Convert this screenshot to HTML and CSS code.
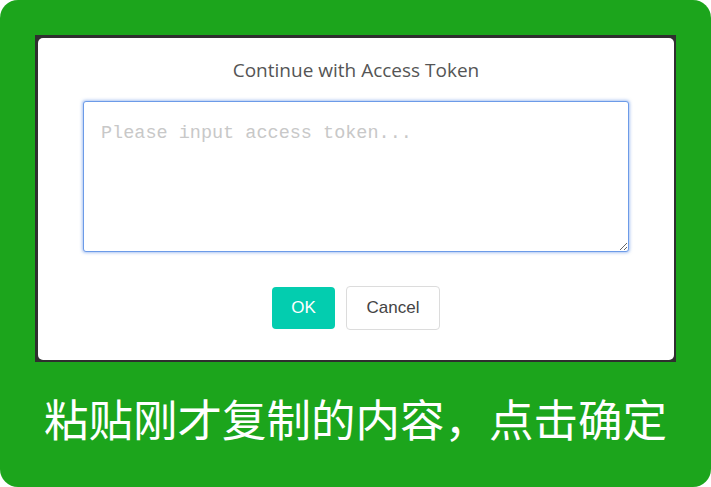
FILE: index.html
```html
<!DOCTYPE html>
<html>
<head>
<meta charset="utf-8">
<link rel="stylesheet" href="styles.css">
</head>
<body>
<div class="card">
  <div class="shot">
    <div class="dialog">
      <div class="title">Continue with Access Token</div>
      <textarea class="token" placeholder="Please input access token..."></textarea>
      <div class="actions">
        <button class="btn ok">OK</button>
        <button class="btn cancel">Cancel</button>
      </div>
    </div>
  </div>
  <div class="caption">粘贴刚才复制的内容，点击确定</div>
</div>
</body>
</html>
```
FILE: styles.css
```css
html, body {
  margin: 0;
  padding: 0;
  background: #ffffff;
}
.card {
  width: 711px;
  height: 487px;
  box-sizing: border-box;
  background: #1ca51c;
  border-radius: 18px;
  padding: 35px 35px 0 35px;
  display: flex;
  flex-direction: column;
}
.shot {
  width: 641px;
  height: 327px;
  box-sizing: border-box;
  background: #2f2f2f;
  padding: 3px 2px 2px 3px;
}
.dialog {
  height: 100%;
  background: #ffffff;
  border-radius: 5px;
  display: flex;
  flex-direction: column;
  align-items: center;
  padding: 20px 45px 0 45px;
  box-sizing: border-box;
}
.title {
  font-family: "Open Sans", "Noto Sans", sans-serif;
  font-size: 19px;
  line-height: 24px;
  color: #555555;
}
.token {
  margin-top: 19px;
  width: 546px;
  height: 151px;
  box-sizing: border-box;
  border: 1px solid #6c9be8;
  border-radius: 3px;
  box-shadow: 0 0 3px 1px rgba(90, 140, 230, 0.5);
  outline: none;
  padding: 21px 17px;
  font-family: "Liberation Mono", monospace;
  font-size: 18.5px;
  line-height: 22px;
  color: #333;
  resize: both;
}
.token::placeholder {
  color: #c8c8c8;
}
.actions {
  margin-top: 34px;
  display: flex;
  gap: 11px;
  align-items: center;
}
.btn {
  font-family: "Liberation Sans", Arial, sans-serif;
  font-size: 17px;
  border-radius: 4px;
  box-sizing: border-box;
  cursor: pointer;
}
.ok {
  width: 63px;
  height: 42px;
  background: #03cdaf;
  border: none;
  color: #ffffff;
}
.cancel {
  width: 94px;
  height: 44px;
  background: #ffffff;
  border: 1px solid #dcdcdc;
  color: #444444;
}
.caption {
  flex: 1;
  display: flex;
  align-items: center;
  justify-content: center;
  padding-bottom: 15px;
  font-family: "Noto Sans CJK SC", sans-serif;
  font-size: 44.5px;
  color: #ffffff;
}
```
